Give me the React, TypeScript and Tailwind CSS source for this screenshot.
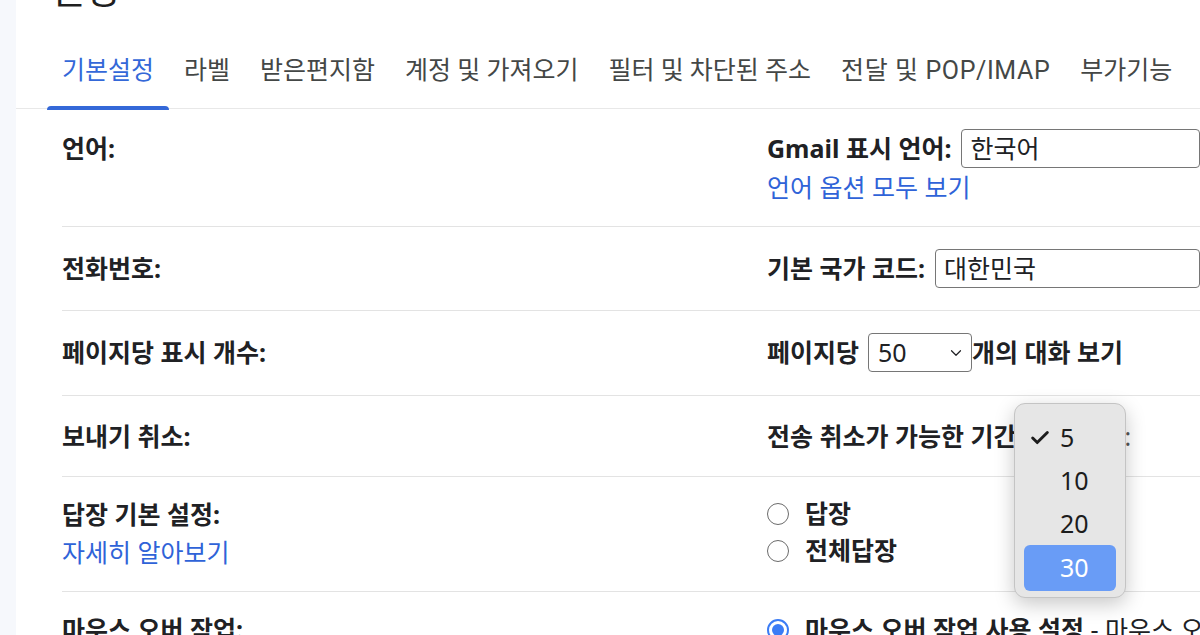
import { ChevronDown, Check } from "lucide-react";

const tabs = ["기본설정", "라벨", "받은편지함", "계정 및 가져오기", "필터 및 차단된 주소", "전달 및 POP/IMAP", "부가기능"];

function Radio({ checked = false }: { checked?: boolean }) {
  if (checked) {
    return (
      <span className="w-[22px] h-[22px] rounded-full border-2 border-[#3b7cf5] flex items-center justify-center shrink-0">
        <span className="w-[12px] h-[12px] rounded-full bg-[#3b7cf5]" />
      </span>
    );
  }
  return <span className="w-[22px] h-[22px] rounded-full border-[1.5px] border-[#6b6b6b] bg-white shrink-0" />;
}

function Row({ label, link, children, className = "" }: { label: string; link?: string; children: React.ReactNode; className?: string }) {
  return (
    <div className={`flex border-b border-[#e3e3e3] ${className}`}>
      <div className="w-[705px] shrink-0">
        <div className="font-bold leading-[39px]">{label}</div>
        {link && <div className="text-[#2f63d8] leading-[37px]">{link}</div>}
      </div>
      <div className="flex-1 min-w-0">{children}</div>
    </div>
  );
}

export default function App() {
  return (
    <div
      className="w-[1200px] h-[635px] overflow-hidden flex bg-white text-[#202124] text-[25px]"
      style={{ fontFamily: '"Noto Sans", "Noto Sans CJK KR", sans-serif' }}
    >
      <div className="w-[16px] shrink-0 bg-[#f6f8fc]" />
      <div className="flex-1 min-w-0 relative">
        <div className="h-[10px] relative overflow-hidden">
          <div className="absolute left-[34px] top-[-34px] text-[38px] leading-[44px] text-[#1f1f1f]">설정</div>
        </div>
        <div className="flex pl-[31px] pt-[44px] border-b border-[#e8e8e8] text-[25px] text-[#444746]" style={{ fontFamily: 'Roboto, "Noto Sans CJK KR", sans-serif' }}>
          {tabs.map((t, i) => (
            <div key={t} className={`px-[15px] pb-[20px] whitespace-nowrap relative ${i === 0 ? "text-[#3468d8]" : ""}`}>
              <div className={`leading-[34px] ${t.includes("POP") ? "tracking-[0.6px]" : ""}`}>{t}</div>
              {i === 0 && <div className="absolute left-0 right-0 bottom-[-2px] h-[4px] rounded-t bg-[#3468d8]" />}
            </div>
          ))}
        </div>

        <div className="pl-[46px]">
          <Row label="언어:" className="pt-[20px] pb-[19px]">
            <div className="flex items-center h-[39px] whitespace-nowrap">
              <span className="font-bold mr-[10px]">Gmail 표시 언어:</span>
              <div className="h-[39px] w-[300px] border border-[#767676] rounded-[4px] px-[8px] flex items-center">한국어</div>
            </div>
            <div className="text-[#2f63d8] leading-[39px]">언어 옵션 모두 보기</div>
          </Row>
          <Row label="전화번호:" className="pt-[22px] pb-[22px]">
            <div className="flex items-center h-[39px] whitespace-nowrap">
              <span className="font-bold mr-[10px]">기본 국가 코드:</span>
              <div className="h-[39px] w-[300px] border border-[#767676] rounded-[4px] px-[8px] flex items-center">대한민국</div>
            </div>
          </Row>
          <Row label="페이지당 표시 개수:" className="pt-[22px] pb-[23px]">
            <div className="flex items-center h-[39px] whitespace-nowrap font-bold">
              <span className="mr-[9px]">페이지당</span>
              <div className="h-[39px] w-[104px] shrink-0 border border-[#767676] rounded-[4px] pl-[9px] pr-[6px] flex items-center justify-between font-normal">
                <span>50</span>
                <ChevronDown size={18} strokeWidth={1.6} />
              </div>
              <span>개의 대화 보기</span>
            </div>
          </Row>
          <Row label="보내기 취소:" className="pt-[21px] pb-[20px]">
            <div className="flex items-center h-[39px] whitespace-nowrap font-bold">
              <span>전송 취소가 가능한 기간</span>
              <span className="ml-[108px] font-normal text-[#555]">:</span>
            </div>
          </Row>
          <Row label="답장 기본 설정:" link="자세히 알아보기" className="pt-[18px] pb-[20px]">
            <div className="flex items-center gap-[16px] h-[37px] font-bold">
              <Radio />
              <span>답장</span>
            </div>
            <div className="flex items-center gap-[16px] h-[37px] font-bold">
              <Radio />
              <span>전체답장</span>
            </div>
          </Row>
          <Row label="마우스 오버 작업:" className="pt-[18px] pb-[20px]">
            <div className="flex items-center gap-[16px] h-[39px] whitespace-nowrap">
              <Radio checked />
              <span>
                <span className="font-bold">마우스 오버 작업 사용 설정</span> - 마우스 오버 시 보관처리, 삭제, 읽음으로 표시
              </span>
            </div>
          </Row>
        </div>

        {/* native select popup */}
        <div className="absolute left-[998px] top-[403px] w-[112px] h-[195px] rounded-[11px] bg-[#e6e6e6] border border-[#c4c4c4] shadow-[0_6px_20px_rgba(0,0,0,0.22)] px-[9px] pt-[12px] text-[25px] text-[#1c1c1c]">
          <div className="h-[43px] flex items-center">
            <Check size={22} strokeWidth={3.2} className="ml-[5px] mr-[9px]" />
            <span>5</span>
          </div>
          <div className="h-[43px] flex items-center pl-[36px]">10</div>
          <div className="h-[43px] flex items-center pl-[36px]">20</div>
          <div className="h-[46px] flex items-center pl-[36px] bg-[#699cf6] rounded-[6px] text-white">30</div>
        </div>
      </div>
    </div>
  );
}
